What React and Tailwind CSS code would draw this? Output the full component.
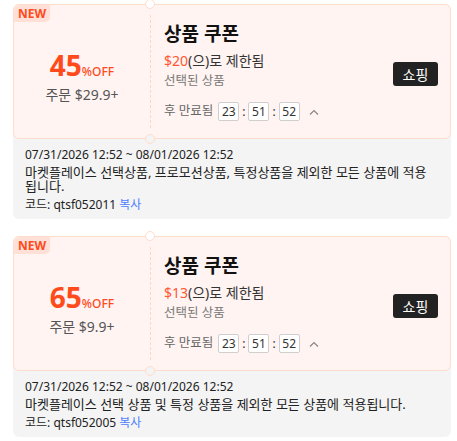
const coupons = [
  {
    off: '45',
    min: '$29.9+',
    limit: '$20',
    desc: '마켓플레이스 선택상품, 프로모션상품, 특정상품을 제외한 모든 상품에 적용됩니다.',
    code: 'qtsf052011',
  },
  {
    off: '65',
    min: '$9.9+',
    limit: '$13',
    desc: '마켓플레이스 선택 상품 및 특정 상품을 제외한 모든 상품에 적용됩니다.',
    code: 'qtsf052005',
  },
]

function TimeBox({ children }) {
  return (
    <span className="flex h-[19px] w-[21px] items-center justify-center rounded-[2px] border border-[#cfcfcf] bg-white text-[12px] text-[#333]">
      {children}
    </span>
  )
}

function Coupon({ c }) {
  return (
    <div className="rounded-md bg-[#f4f4f4]">
      <div className="relative flex h-[135px] rounded-md border border-[#ffdccb] bg-[#fff4f1]">
        <span className="absolute left-0 top-0 rounded-br-[5px] rounded-tl-md bg-[#ffe0d6] px-[4px] text-[12px] font-bold leading-[17px] text-[#ff4a1c]">
          NEW
        </span>
        {/* notches */}
        <span className="absolute left-[131px] top-[-6px] h-[10px] w-[10px] rounded-full border border-[#ffdccb] bg-white"></span>
        <span className="absolute bottom-[-6px] left-[131px] h-[10px] w-[10px] rounded-full border border-[#ffdccb] bg-[#f4f4f4]"></span>
        <span className="absolute bottom-[10px] left-[136px] top-[10px] border-l border-dashed border-[#ffd6c6]"></span>

        <div className="flex w-[136px] shrink-0 flex-col items-center pt-[44px]">
          <div className="flex items-baseline leading-[32px] text-[#ff4a1c]">
            <span className="text-[28px] font-bold">{c.off}</span>
            <span className="text-[12px] font-medium leading-none">%OFF</span>
          </div>
          <div className="mt-[4px] text-[14px] leading-[20px] text-[#555]">주문 {c.min}</div>
        </div>

        <div className="flex flex-1 items-center pl-[14px] pr-[12px]">
          <div className="flex flex-1 flex-col self-start pt-[17px]">
            <div className="text-[19px] font-bold leading-[24px] text-[#111]">상품 쿠폰</div>
            <div className="mt-[6px] text-[14px] leading-[18px] text-[#333]">
              <span className="text-[#ff5733]">{c.limit}</span>(으)로 제한됨
            </div>
            <div className="mt-[3px] text-[12.5px] leading-[16px] text-[#777]">선택된 상품</div>
            <div className="mt-[13px] flex items-center text-[12px] text-[#666]">
              <span className="mr-[5px] text-[12.5px]">후 만료됨</span>
              <TimeBox>23</TimeBox>
              <span className="mx-[3px] text-[#333]">:</span>
              <TimeBox>51</TimeBox>
              <span className="mx-[3px] text-[#333]">:</span>
              <TimeBox>52</TimeBox>
              <svg className="ml-[9px]" width="10" height="6" viewBox="0 0 10 6" fill="none">
                <polyline points="1,5.5 5,1.5 9,5.5" stroke="#888" strokeWidth="1.2" />
              </svg>
            </div>
          </div>
          <button className="mt-[5px] h-[24px] w-[45px] rounded-[3px] bg-[#222] text-[14px] text-white">쇼핑</button>
        </div>
      </div>
      <div className="pb-[6px] pl-3 pr-[14px] pt-[8px] text-[12px] text-[#222]">
        <div className="leading-[16px]">07/31/2026 12:52 ~ 08/01/2026 12:52</div>
        <div className="mt-[2px] text-[13px] leading-[14px]">{c.desc}</div>
        <div className="mt-[4px] leading-[16px]">
          코드: {c.code} <span className="text-[#4f7fff]">복사</span>
        </div>
      </div>
    </div>
  )
}

export default function App() {
  return (
    <div className="flex w-[457px] flex-col gap-[17px] bg-white pb-2 pl-[13px] pr-[6px] pt-[4px] font-['Noto_Sans','Noto_Sans_CJK_KR',sans-serif]">
      {coupons.map((c, i) => (
        <Coupon key={i} c={c} />
      ))}
    </div>
  )
}
